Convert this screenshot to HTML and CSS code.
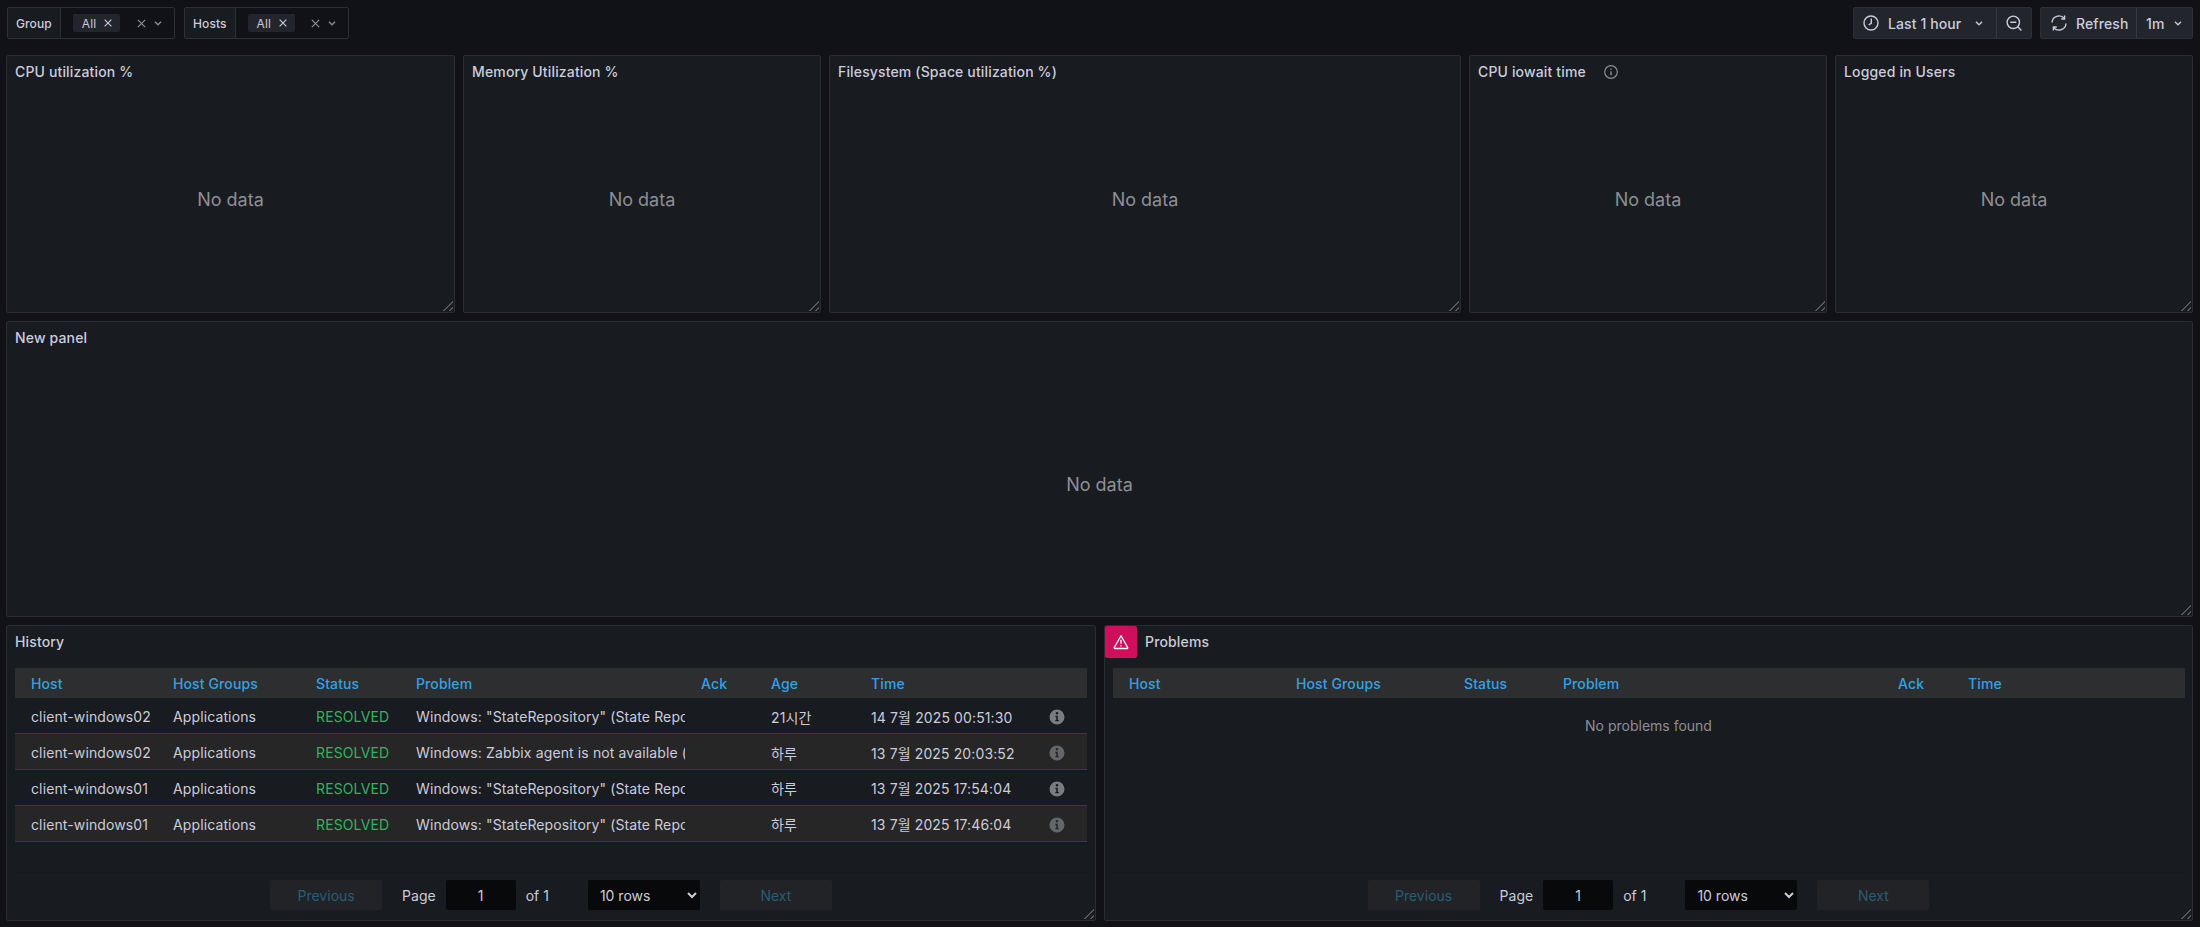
FILE: index.html
```html
<!DOCTYPE html>
<html lang="en">
<head>
<meta charset="utf-8">
<title>Dashboard</title>
<link rel="stylesheet" href="styles.css">
</head>
<body>
<svg class="defs" width="0" height="0" aria-hidden="true">
  <symbol id="x" viewBox="0 0 16 16"><path d="M3.500 3.500l9 9M12.500 3.500l-9 9" fill="none" stroke="currentColor" stroke-width="1.500"/></symbol>
  <symbol id="chev" viewBox="0 0 16 16"><path d="M4.500 6.500L8 10l3.500-3.500" fill="none" stroke="currentColor" stroke-width="1.500"/></symbol>
  <symbol id="info" viewBox="0 0 16 16"><path fill="currentColor" fill-rule="evenodd" d="M8 .5a7.500 7.500 0 1 1 0 15a7.500 7.500 0 0 1 0-15zM8 3a1.300 1.300 0 1 0 0 2.600A1.300 1.300 0 0 0 8 3zM6.300 6.800v1.200h.9v3H6.300v1.200h3.400V11h-.9V6.800z"/></symbol>
</svg>

<header class="toolbar">
  <div class="filter filter-group">
    <span class="filter-label">Group</span>
    <div class="filter-value">
      <span class="chip">All<svg class="chip-x"><use href="#x"/></svg></span>
      <svg class="clear"><use href="#x"/></svg>
      <svg class="chev"><use href="#chev"/></svg>
    </div>
  </div>
  <div class="filter filter-hosts">
    <span class="filter-label">Hosts</span>
    <div class="filter-value">
      <span class="chip">All<svg class="chip-x"><use href="#x"/></svg></span>
      <svg class="clear"><use href="#x"/></svg>
      <svg class="chev"><use href="#chev"/></svg>
    </div>
  </div>
  <div class="spacer"></div>
  <div class="btn-group time-group">
    <div class="btn btn-time">
      <svg class="btn-icon" viewBox="0 0 16 16"><circle cx="8" cy="8" r="7" fill="none" stroke="currentColor" stroke-width="1.400"/><path d="M8.300 3.600v4.700L5.700 9.800" fill="none" stroke="currentColor" stroke-width="1.400"/></svg>
      <span>Last 1 hour</span>
      <svg class="btn-chev"><use href="#chev"/></svg>
    </div>
    <div class="btn btn-zoom">
      <svg class="btn-icon" viewBox="0 0 16 16"><circle cx="7.300" cy="7.300" r="6.200" fill="none" stroke="currentColor" stroke-width="1.400"/><path d="M4.300 7.300h6M11.800 11.800l3.600 3.600" fill="none" stroke="currentColor" stroke-width="1.400"/></svg>
    </div>
  </div>
  <div class="btn-group refresh-group">
    <div class="btn btn-refresh">
      <svg class="btn-icon" viewBox="0 0 16 16"><path d="M15 8.500a7 7 0 0 1-12.200 4.200M1 7.500a7 7 0 0 1 12.200-4.200" fill="none" stroke="currentColor" stroke-width="1.400"/><path d="M13.600 .6v3.400h-3.400M2.400 15.400V12h3.400" fill="none" stroke="currentColor" stroke-width="1.400"/></svg>
      <span>Refresh</span>
    </div>
    <div class="btn btn-interval">
      <span>1m</span>
      <svg class="btn-chev"><use href="#chev"/></svg>
    </div>
  </div>
</header>

<main class="dashboard">
  <section class="row row-top">
    <article class="panel"><h2 class="panel-title">CPU utilization %</h2><div class="no-data">No data</div></article>
    <article class="panel"><h2 class="panel-title">Memory Utilization %</h2><div class="no-data">No data</div></article>
    <article class="panel"><h2 class="panel-title">Filesystem (Space utilization %)</h2><div class="no-data">No data</div></article>
    <article class="panel"><h2 class="panel-title">CPU iowait time<svg class="title-info" viewBox="0 0 16 16"><circle cx="8" cy="8" r="6.300" fill="none" stroke="currentColor" stroke-width="1.200"/><path d="M8 7.300v4M8 4.500v1.300" fill="none" stroke="currentColor" stroke-width="1.400"/></svg></h2><div class="no-data">No data</div></article>
    <article class="panel"><h2 class="panel-title">Logged in Users</h2><div class="no-data">No data</div></article>
  </section>

  <section class="row row-mid">
    <article class="panel"><h2 class="panel-title">New panel</h2><div class="no-data">No data</div></article>
  </section>

  <section class="row row-bottom">
    <article class="panel">
      <h2 class="panel-title">History</h2>
      <div class="table-wrap">
        <table class="grid history">
          <colgroup><col class="h1"><col class="h2"><col class="h3"><col class="h4"><col class="h5"><col class="h6"><col class="h7"><col class="h8"></colgroup>
          <thead><tr><th>Host</th><th>Host Groups</th><th>Status</th><th>Problem</th><th>Ack</th><th>Age</th><th>Time</th><th></th></tr></thead>
          <tbody>
            <tr><td>client-windows02</td><td>Applications</td><td class="ok">RESOLVED</td><td class="prob"><div>Windows: "StateRepository" (State Repository Service) is not running</div></td><td></td><td>21시간</td><td>14 7월 2025 00:51:30</td><td class="ic"><svg class="row-info"><use href="#info"/></svg></td></tr>
            <tr class="alt"><td>client-windows02</td><td>Applications</td><td class="ok">RESOLVED</td><td class="prob"><div>Windows: Zabbix agent is not available (for 3m)</div></td><td></td><td>하루</td><td>13 7월 2025 20:03:52</td><td class="ic"><svg class="row-info"><use href="#info"/></svg></td></tr>
            <tr><td>client-windows01</td><td>Applications</td><td class="ok">RESOLVED</td><td class="prob"><div>Windows: "StateRepository" (State Repository Service) is not running</div></td><td></td><td>하루</td><td>13 7월 2025 17:54:04</td><td class="ic"><svg class="row-info"><use href="#info"/></svg></td></tr>
            <tr class="alt"><td>client-windows01</td><td>Applications</td><td class="ok">RESOLVED</td><td class="prob"><div>Windows: "StateRepository" (State Repository Service) is not running</div></td><td></td><td>하루</td><td>13 7월 2025 17:46:04</td><td class="ic"><svg class="row-info"><use href="#info"/></svg></td></tr>
          </tbody>
        </table>
      </div>
      <div class="pager">
        <button class="pg-btn" disabled>Previous</button>
        <span class="pg-text pg-page">Page</span>
        <input class="pg-input" value="1" aria-label="Page">
        <span class="pg-text pg-of">of 1</span>
        <select class="pg-select" aria-label="Rows"><option>10 rows</option></select>
        <button class="pg-btn" disabled>Next</button>
      </div>
    </article>

    <article class="panel">
      <div class="alert-badge">
        <svg viewBox="0 0 16 16" width="16" height="16"><path d="M8 1.800L14.700 13.500a.7.700 0 0 1-.6 1H1.900a.7.700 0 0 1-.6-1z" fill="none" stroke="#fff" stroke-width="1.300" stroke-linejoin="round"/><path d="M8 5.800v4M8 11.200v1.200" stroke="#fff" stroke-width="1.300"/></svg>
      </div>
      <h2 class="panel-title title-alert">Problems</h2>
      <div class="table-wrap">
        <table class="grid problems">
          <colgroup><col class="p1"><col class="p2"><col class="p3"><col class="p4"><col class="p5"><col class="p6"></colgroup>
          <thead><tr><th>Host</th><th>Host Groups</th><th>Status</th><th>Problem</th><th>Ack</th><th>Time</th></tr></thead>
        </table>
        <div class="empty">No problems found</div>
      </div>
      <div class="pager">
        <button class="pg-btn" disabled>Previous</button>
        <span class="pg-text pg-page">Page</span>
        <input class="pg-input" value="1" aria-label="Page">
        <span class="pg-text pg-of">of 1</span>
        <select class="pg-select" aria-label="Rows"><option>10 rows</option></select>
        <button class="pg-btn" disabled>Next</button>
      </div>
    </article>
  </section>
</main>
</body>
</html>
```

FILE: styles.css
```css
* { box-sizing: border-box; }
html, body { height: 100%; }
body {
  margin: 0;
  background: #111217;
  color: #ccccdc;
  font-family: Inter, "Noto Sans CJK KR", sans-serif;
  font-size: 14px;
  overflow: hidden;
}
.defs { position: absolute; }

/* toolbar */
.toolbar {
  display: flex;
  align-items: stretch;
  height: 32px;
  margin: 7px 7px 16px 7px;
  gap: 8px;
}
.spacer { flex: 1; }
.filter {
  display: flex;
  border: 1px solid #2d2f35;
  border-radius: 2px;
  font-size: 12px;
}
.filter-group { width: 168px; }
.filter-hosts { width: 165px; margin-left: 1px; }
.filter-label {
  display: flex;
  align-items: center;
  padding: 0 8px;
  background: #181b1f;
  border-right: 1px solid #2d2f35;
  font-weight: 500;
  letter-spacing: .1px;
  color: #ccccdc;
}
.filter-value {
  flex: 1;
  display: flex;
  align-items: center;
  padding-left: 12px;
}
.chip {
  display: flex;
  align-items: center;
  height: 18px;
  padding: 0 6px 0 9px;
  border-radius: 2px;
  background: #22252b;
  color: #ccccdc;
  font-size: 12px;
  letter-spacing: .1px;
}
.chip-x { width: 12px; height: 12px; margin-left: 6px; color: #ccccdc; }
.clear { width: 13px; height: 13px; margin-left: auto; color: #8d8e95; }
.chev { width: 14px; height: 14px; margin: 0 9px 0 3px; color: #8d8e95; }

.btn-group {
  display: flex;
  background: #22252b;
  border: 1px solid #2d2f35;
  border-radius: 2px;
  color: #ccccdc;
}
.time-group { width: 179px; }
.refresh-group { width: 153px; }
.btn { display: flex; align-items: center; font-weight: 500; letter-spacing: .1px; }
.btn-time { width: 143px; padding-left: 9px; border-right: 1px solid #37393f; }
.btn-time span { margin-left: 9px; }
.btn-chev { width: 14px; height: 14px; margin-left: auto; margin-right: 10px; }
.btn-zoom { flex: 1; justify-content: center; }
.btn-icon { width: 16px; height: 16px; flex: none; }
.btn-refresh { width: 96px; padding-left: 10px; border-right: 1px solid #37393f; }
.btn-refresh span { margin-left: 9px; }
.btn-interval { flex: 1; padding-left: 9px; }
.btn-interval .btn-chev { margin-right: 7px; }

/* grid */
.dashboard {
  display: flex;
  flex-direction: column;
  gap: 8px;
  padding: 0 7px 0 6px;
}
.row { display: grid; gap: 8px; }
.row-top { grid-template-columns: 449px 358px 632px 358px 358px; height: 258px; }
.row-mid { grid-template-columns: 1fr; height: 296px; }
.row-bottom { grid-template-columns: 1090px 1fr; height: 296px; }

.panel {
  position: relative;
  display: flex;
  flex-direction: column;
  min-width: 0;
  background: #181b1f;
  border: 1px solid #2a2c31;
  border-radius: 2px;
}
.panel::after {
  content: "";
  position: absolute;
  right: 1px;
  bottom: 1px;
  width: 10px;
  height: 10px;
  background:
    linear-gradient(135deg, transparent 0 46%, #55575c 46% 58%, transparent 58% 76%, #55575c 76% 88%, transparent 88%);
}
.panel-title {
  margin: 0;
  height: 31px;
  padding: 7px 8px 0 8px;
  font-size: 14px;
  line-height: 17px;
  font-weight: 500;
  letter-spacing: .15px;
  color: #ccccdc;
  white-space: nowrap;
}
.title-info { width: 16px; height: 16px; margin-left: 17px; vertical-align: -3px; color: #8d8e95; }
.no-data {
  flex: 1;
  display: flex;
  align-items: center;
  justify-content: center;
  font-size: 18px;
  color: #8e8f96;
}

/* tables */
.table-wrap { flex: 1; padding: 11px 8px 0 8px; min-height: 0; }
.grid {
  width: 1072px;
  border-collapse: collapse;
  table-layout: fixed;
  font-size: 14px;
  letter-spacing: .12px;
}
.grid th {
  height: 30px;
  padding: 0 0 0 16px;
  background: #2d2e30;
  color: #33a2e5;
  font-weight: 500;
  text-align: left;
  white-space: nowrap;
}
.grid td {
  height: 35.75px;
  padding: 2px 0 0 16px;
  border-bottom: 1px solid #1d4358;
  color: #ccccdc;
  white-space: nowrap;
  overflow: hidden;
}
.grid .alt td { background: #262626; }
.grid td.ok { color: #2fb463; }
.grid td.prob div { overflow: hidden; }
.grid td.ic { padding: 3px 0 0 14px; }
.row-info { display: block; width: 16px; height: 16px; color: #7b7c80; }
.alt .row-info { color: #65666a; }

.h1 { width: 142px; } .h2 { width: 143px; } .h3 { width: 100px; } .h4 { width: 285px; }
.h5 { width: 70px; } .h6 { width: 100px; } .h7 { width: 180px; } .h8 { width: 52px; }
.p1 { width: 167px; } .p2 { width: 168px; } .p3 { width: 99px; } .p4 { width: 335px; }
.p5 { width: 70px; } .p6 { width: 233px; }

.empty {
  margin-top: 19px;
  text-align: center;
  font-size: 14px;
  line-height: 17px;
  color: #8e8f96;
}

/* alert */
.alert-badge {
  position: absolute;
  top: 0;
  left: 0;
  width: 32px;
  height: 32px;
  display: flex;
  align-items: center;
  justify-content: center;
  background: #d10e5c;
  border-radius: 2px;
}
.title-alert { padding-left: 40px; }

/* pager */
.pager {
  display: flex;
  align-items: center;
  justify-content: center;
  height: 48px;
  margin: 0 8px;
  padding: 7px 0 10px 0;
  border-top: 1px solid #16181c;
  font-size: 14px;
}
.pg-btn {
  width: 112px;
  height: 30px;
  border: 0;
  border-radius: 2px;
  background: #212327;
  color: #285d74;
  font: 14px Inter, sans-serif;
  padding: 0;
}
.pg-text { color: #ccccdc; }
.pg-page { margin-left: 20px; }
.pg-of { margin-left: 10px; }
.pg-input {
  width: 70px;
  height: 30px;
  margin-left: 10px;
  border: 0;
  border-radius: 2px;
  background: #08090b;
  color: #ccccdc;
  font: 14px Inter, sans-serif;
  text-align: center;
}
.pg-select {
  width: 112px;
  height: 30px;
  margin: 0 20px 0 39px;
  border: 0;
  border-radius: 2px;
  background-color: #08090b;
  color: #ccccdc;
  font: 14px Inter, sans-serif;
  padding-left: 8px;
}
```
